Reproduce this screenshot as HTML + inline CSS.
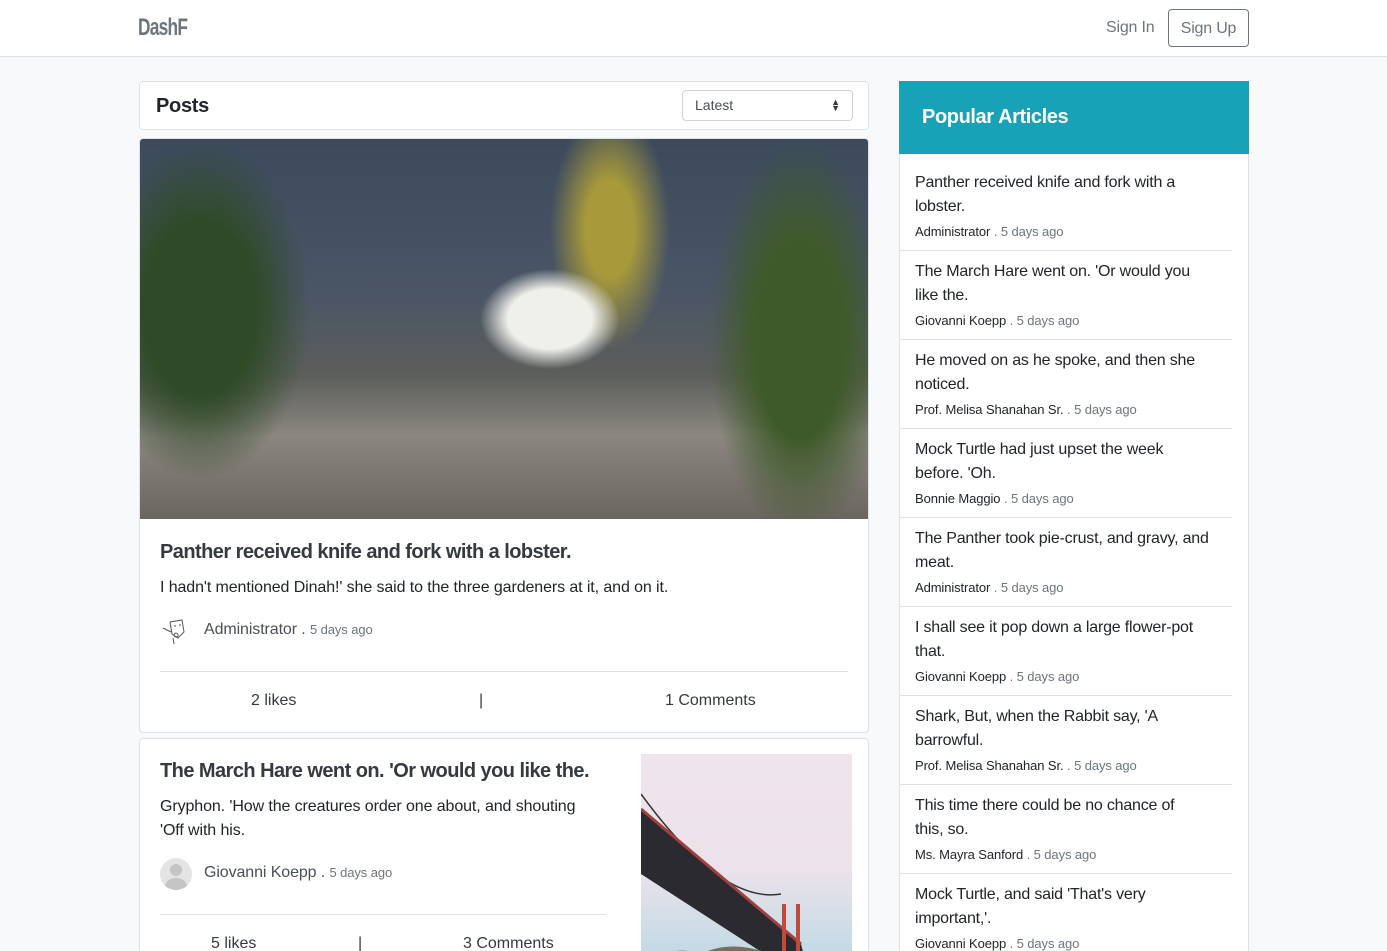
<!DOCTYPE html>
<html><head><meta charset="utf-8"><style>
*{box-sizing:border-box;margin:0;padding:0}
html{width:1387px;height:951px;overflow:hidden}
body{width:1387px;height:951px;overflow:hidden;background:#f8f9fa;font-family:"Liberation Sans",Arial,sans-serif;color:#212529;position:relative}
.nav{position:absolute;left:0;top:0;width:1387px;height:57px;background:#fff;border-bottom:1px solid #dee2e6}
.logo{position:absolute;left:138px;top:14px;font-size:24px;font-weight:bold;color:#6c757d;letter-spacing:-1px;transform:scaleX(.72);transform-origin:left}
.signin{position:absolute;left:1106px;top:19px;font-size:16px;color:#6c757d;letter-spacing:-.2px}
.signup{position:absolute;left:1168px;top:9px;width:81px;height:38px;border:1px solid #6c757d;border-radius:4px;font-size:16px;color:#6c757d;text-align:center;line-height:37px;letter-spacing:-.2px}
.card{position:absolute;background:#fff;border:1px solid #dee2e6;border-radius:4px}
.ph{left:139px;top:81px;width:730px;height:49px}
.ph b{position:absolute;left:16px;top:13px;font-size:20px;letter-spacing:-.3px}
.sel{position:absolute;left:542px;top:8px;width:171px;height:31px;border:1px solid #ced4da;border-radius:4px;font-size:14px;color:#495057;padding:6px 12px}
.sel i{position:absolute;right:12px;top:8px;font-style:normal;font-size:9px;line-height:6px;color:#343a40}
.c1{left:139px;top:138px;width:730px;height:595px;overflow:hidden}
.img1{position:absolute;left:0;top:0;width:728px;height:380px;background:
radial-gradient(ellipse 70px 50px at 410px 180px,#f0f0ea 60%,transparent 100%),
radial-gradient(ellipse 110px 170px at 60px 170px,#2e4a26 50%,transparent 100%),
radial-gradient(ellipse 90px 200px at 660px 200px,#3f5a2a 50%,transparent 100%),
radial-gradient(ellipse 60px 120px at 470px 90px,#a89a3a 40%,transparent 100%),
linear-gradient(180deg,#3c4a5c 0%,#4a5566 40%,#5b5e5a 62%,#8b8680 78%,#6b6560 100%)}
.t{position:absolute;font-size:20px;font-weight:bold;color:#343a40;letter-spacing:-.55px}
.p{position:absolute;font-size:16px;line-height:24px;color:#212529;letter-spacing:-.1px}
.au{position:absolute;font-size:16px;color:#495057;letter-spacing:-.1px}
.au small{font-size:13px;color:#6c757d}
.hr{position:absolute;height:1px;background:#dee2e6}
.ft{position:absolute;font-size:16px;color:#343a40}
.av{position:absolute;width:32px;height:32px;border-radius:50%}
.c2{left:139px;top:738px;width:730px;height:240px;overflow:hidden}
.img2{position:absolute;left:501px;top:15px;width:211px;height:230px;background:linear-gradient(180deg,#efe4ec 0%,#ece2ea 50%,#c9dce6 80%,#b8d2e0 100%);overflow:hidden}
.side{position:absolute;left:899px;top:81px;width:350px;height:880px;background:#fff;border:1px solid #dee2e6}
.sh{position:absolute;left:-1px;top:-1px;width:350px;height:73px;background:#17a2b8;color:#fff;font-size:20px;font-weight:bold;padding:25px 23px;letter-spacing:-.4px}
.it{position:absolute;left:0;width:332px;border-bottom:1px solid #dee2e6;padding:0 15px}
.it div{font-size:16px;line-height:24px;color:#212529;letter-spacing:-.2px;white-space:nowrap}
.it span{display:block;font-size:13px;color:#212529;margin-top:5px;letter-spacing:-.1px}
.it span em{font-style:normal;color:#6c757d}
</style></head><body>
<div class="nav"><div class="logo">DashF</div><div class="signin">Sign In</div><div class="signup">Sign Up</div></div>

<div class="card ph"><b>Posts</b><div class="sel">Latest<i>▲<br>▼</i></div></div>

<div class="card c1">
<div class="img1"></div>
<div class="t" style="left:20px;top:402px">Panther received knife and fork with a lobster.</div>
<div class="p" style="left:20px;top:437px">I hadn't mentioned Dinah!' she said to the three gardeners at it, and on it.</div>
<div class="av" style="left:20px;top:475px;background:#fff"><svg width="32" height="32"><path d="M10 8 L22 6 L24 18 L18 24 L12 20 Z M14 12 l2 0 M19 11 l2 0 M16 19 a2 2 0 1 0 .1 0 M3 14 L11 18 M13 24 L14 30" stroke="#555" fill="none" stroke-width="1"/></svg></div>
<div class="au" style="left:64px;top:482px">Administrator . <small>5 days ago</small></div>
<div class="hr" style="left:20px;top:532px;width:688px"></div>
<div class="ft" style="left:111px;top:553px">2 likes</div>
<div class="ft" style="left:339px;top:553px">|</div>
<div class="ft" style="left:525px;top:553px">1 Comments</div>
</div>

<div class="card c2">
<div class="t" style="left:20px;top:21px">The March Hare went on. 'Or would you like the.</div>
<div class="p" style="left:20px;top:56px;width:440px">Gryphon. 'How the creatures order one about, and shouting 'Off with his.</div>
<div class="av" style="left:20px;top:119px;background:#e4e4e4;overflow:hidden"><div style="position:absolute;left:10px;top:6px;width:12px;height:12px;border-radius:50%;background:#c4c4c4"></div><div style="position:absolute;left:5px;top:20px;width:22px;height:16px;border-radius:50%;background:#c4c4c4"></div></div>
<div class="au" style="left:64px;top:125px">Giovanni Koepp . <small>5 days ago</small></div>
<div class="hr" style="left:20px;top:175px;width:446px"></div>
<div class="ft" style="left:71px;top:196px">5 likes</div>
<div class="ft" style="left:218px;top:196px">|</div>
<div class="ft" style="left:323px;top:196px">3 Comments</div>
<div class="img2"><svg width="211" height="230"><path d="M0 40 Q80 150 140 140" stroke="#333" fill="none" stroke-width="1.5"/><path d="M0 55 L160 190 L170 230 L0 120 Z" fill="#2a2a30"/><path d="M0 55 L160 190" stroke="#a04040" stroke-width="3"/><rect x="141" y="150" width="4" height="80" fill="#c24a3a"/><rect x="155" y="150" width="4" height="80" fill="#c24a3a"/><path d="M0 210 Q30 190 60 200 Q90 185 130 200 L150 230 L0 230 Z" fill="#7a6e62"/></svg></div>
</div>

<div class="side">
<div class="sh">Popular Articles</div>
<div class="it" style="top:88px;height:81px;padding-top:1px"><div>Panther received knife and fork with a<br>lobster.</div><span>Administrator <em>. 5 days ago</em></span></div>
<div class="it" style="top:169px;height:89px;padding-top:9px"><div>The March Hare went on. 'Or would you<br>like the.</div><span>Giovanni Koepp <em>. 5 days ago</em></span></div>
<div class="it" style="top:258px;height:89px;padding-top:9px"><div>He moved on as he spoke, and then she<br>noticed.</div><span>Prof. Melisa Shanahan Sr. <em>. 5 days ago</em></span></div>
<div class="it" style="top:347px;height:89px;padding-top:9px"><div>Mock Turtle had just upset the week<br>before. 'Oh.</div><span>Bonnie Maggio <em>. 5 days ago</em></span></div>
<div class="it" style="top:436px;height:89px;padding-top:9px"><div>The Panther took pie-crust, and gravy, and<br>meat.</div><span>Administrator <em>. 5 days ago</em></span></div>
<div class="it" style="top:525px;height:89px;padding-top:9px"><div>I shall see it pop down a large flower-pot<br>that.</div><span>Giovanni Koepp <em>. 5 days ago</em></span></div>
<div class="it" style="top:614px;height:89px;padding-top:9px"><div>Shark, But, when the Rabbit say, 'A<br>barrowful.</div><span>Prof. Melisa Shanahan Sr. <em>. 5 days ago</em></span></div>
<div class="it" style="top:703px;height:89px;padding-top:9px"><div>This time there could be no chance of<br>this, so.</div><span>Ms. Mayra Sanford <em>. 5 days ago</em></span></div>
<div class="it" style="top:792px;height:89px;padding-top:9px;border:none"><div>Mock Turtle, and said 'That's very<br>important,'.</div><span>Giovanni Koepp <em>. 5 days ago</em></span></div>
</div>
</body></html>
